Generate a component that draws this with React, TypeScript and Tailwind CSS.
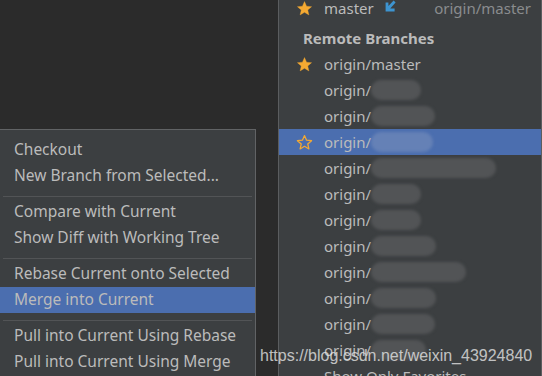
import React from 'react';

type MenuEntry = { label: string; active?: boolean } | 'sep';

const menu: MenuEntry[] = [
  { label: 'Checkout' },
  { label: 'New Branch from Selected...' },
  'sep',
  { label: 'Compare with Current' },
  { label: 'Show Diff with Working Tree' },
  'sep',
  { label: 'Rebase Current onto Selected' },
  { label: 'Merge into Current', active: true },
  'sep',
  { label: 'Pull into Current Using Rebase' },
  { label: 'Pull into Current Using Merge' },
];

// blurred redaction after "origin/"
const remotes = [
  { star: 'filled', name: 'origin/master', blur: 0 },
  { blur: 50 },
  { blur: 64 },
  { star: 'outline', blur: 62, active: true },
  { blur: 125 },
  { blur: 50 },
  { blur: 50 },
  { blur: 65 },
  { blur: 95 },
  { blur: 65 },
  { blur: 64 },
  { blur: 55 },
];

const Star = ({ filled }: { filled: boolean }) => (
  <svg width="17" height="17" viewBox="0 0 24 24" className="shrink-0">
    <path
      d="M12 2.2l2.9 6.6 7.1.6-5.4 4.7 1.6 7-6.2-3.7-6.2 3.7 1.6-7L2 9.4l7.1-.6z"
      fill={filled ? '#f4a932' : 'none'}
      stroke="#f4a932"
      strokeWidth={filled ? 0.5 : 1.8}
      strokeLinejoin="round"
    />
  </svg>
);

const IncomingArrow = () => (
  <svg width="12" height="13" viewBox="0 0 12 13">
    <path d="M11.6 2.4L9.6 0.6 4.4 6V2.4H1.6V11.4h9V8.6H6.2z" fill="#3d94d0" />
  </svg>
);

export default function App() {
  const font = { fontFamily: '"Noto Sans", "Open Sans", sans-serif' };
  return (
    <div className="relative flex w-[542px] h-[376px] overflow-hidden bg-[#2b2b2b] text-[#bbbbbb]" style={font}>
      {/* left: popup menu */}
      <div className="flex flex-col w-[278px] shrink-0">
        <div className="h-[129px] shrink-0" />
        <div className="w-[256px] flex-1 bg-[#3c3f41] border-t border-r border-[#616365] pt-[7px] text-[15.5px]">
          {menu.map((m, i) =>
            m === 'sep' ? (
              <div key={i} className="pt-[7px] pb-[2px]">
                <div className="mx-[3px] h-px bg-[#525456]" />
              </div>
            ) : (
              <div
                key={i}
                className={`h-[26px] flex items-center pl-[14px] ${m.active ? 'bg-[#4b6eaf]' : ''}`}
              >
                {m.label}
              </div>
            )
          )}
        </div>
      </div>

      {/* right: branches popup */}
      <div className="flex-1 bg-[#3c3f41] border-l border-r border-[#5b5d5f] text-[15px]">
        <div className="mt-[-5px]">
          <div className="h-[26px] flex items-center pl-[17px] pr-[10px]">
            <Star filled />
            <span className="ml-[11px]">master</span>
            <span className="ml-[10px] mt-[-3px]"><IncomingArrow /></span>
            <span className="ml-auto text-[#8a8c8e]">origin/master</span>
          </div>
          <div className="h-[30px] flex items-center pt-[4px] pl-[24px] font-bold">Remote Branches</div>
          {remotes.map((r, i) => (
            <div
              key={i}
              className={`h-[26px] flex items-center pl-[17px] ${r.active ? 'bg-[#4b6eaf]' : ''}`}
            >
              <span className="w-[17px] shrink-0">
                {r.star && <Star filled={r.star === 'filled'} />}
              </span>
              <span className="ml-[11px]">{r.name ?? 'origin/'}</span>
              {r.blur > 0 && (
                <span
                  className={`h-[20px] rounded-full blur-[1.5px] ${r.active ? 'bg-[#6581b6]' : 'bg-[#525456]'}`}
                  style={{ width: r.blur }}
                />
              )}
            </div>
          ))}
          <div className="h-[26px] flex items-center pl-[45px]">Show Only Favorites</div>
        </div>
      </div>

      {/* csdn watermark */}
      <div
        className="absolute left-[260px] top-[344px] text-[16px] text-[#e6e6e6]/80 whitespace-nowrap"
        style={{ fontFamily: '"Liberation Sans", Arial, sans-serif' }}
      >
        https://blog.csdn.net/weixin_43924840
      </div>
    </div>
  );
}
